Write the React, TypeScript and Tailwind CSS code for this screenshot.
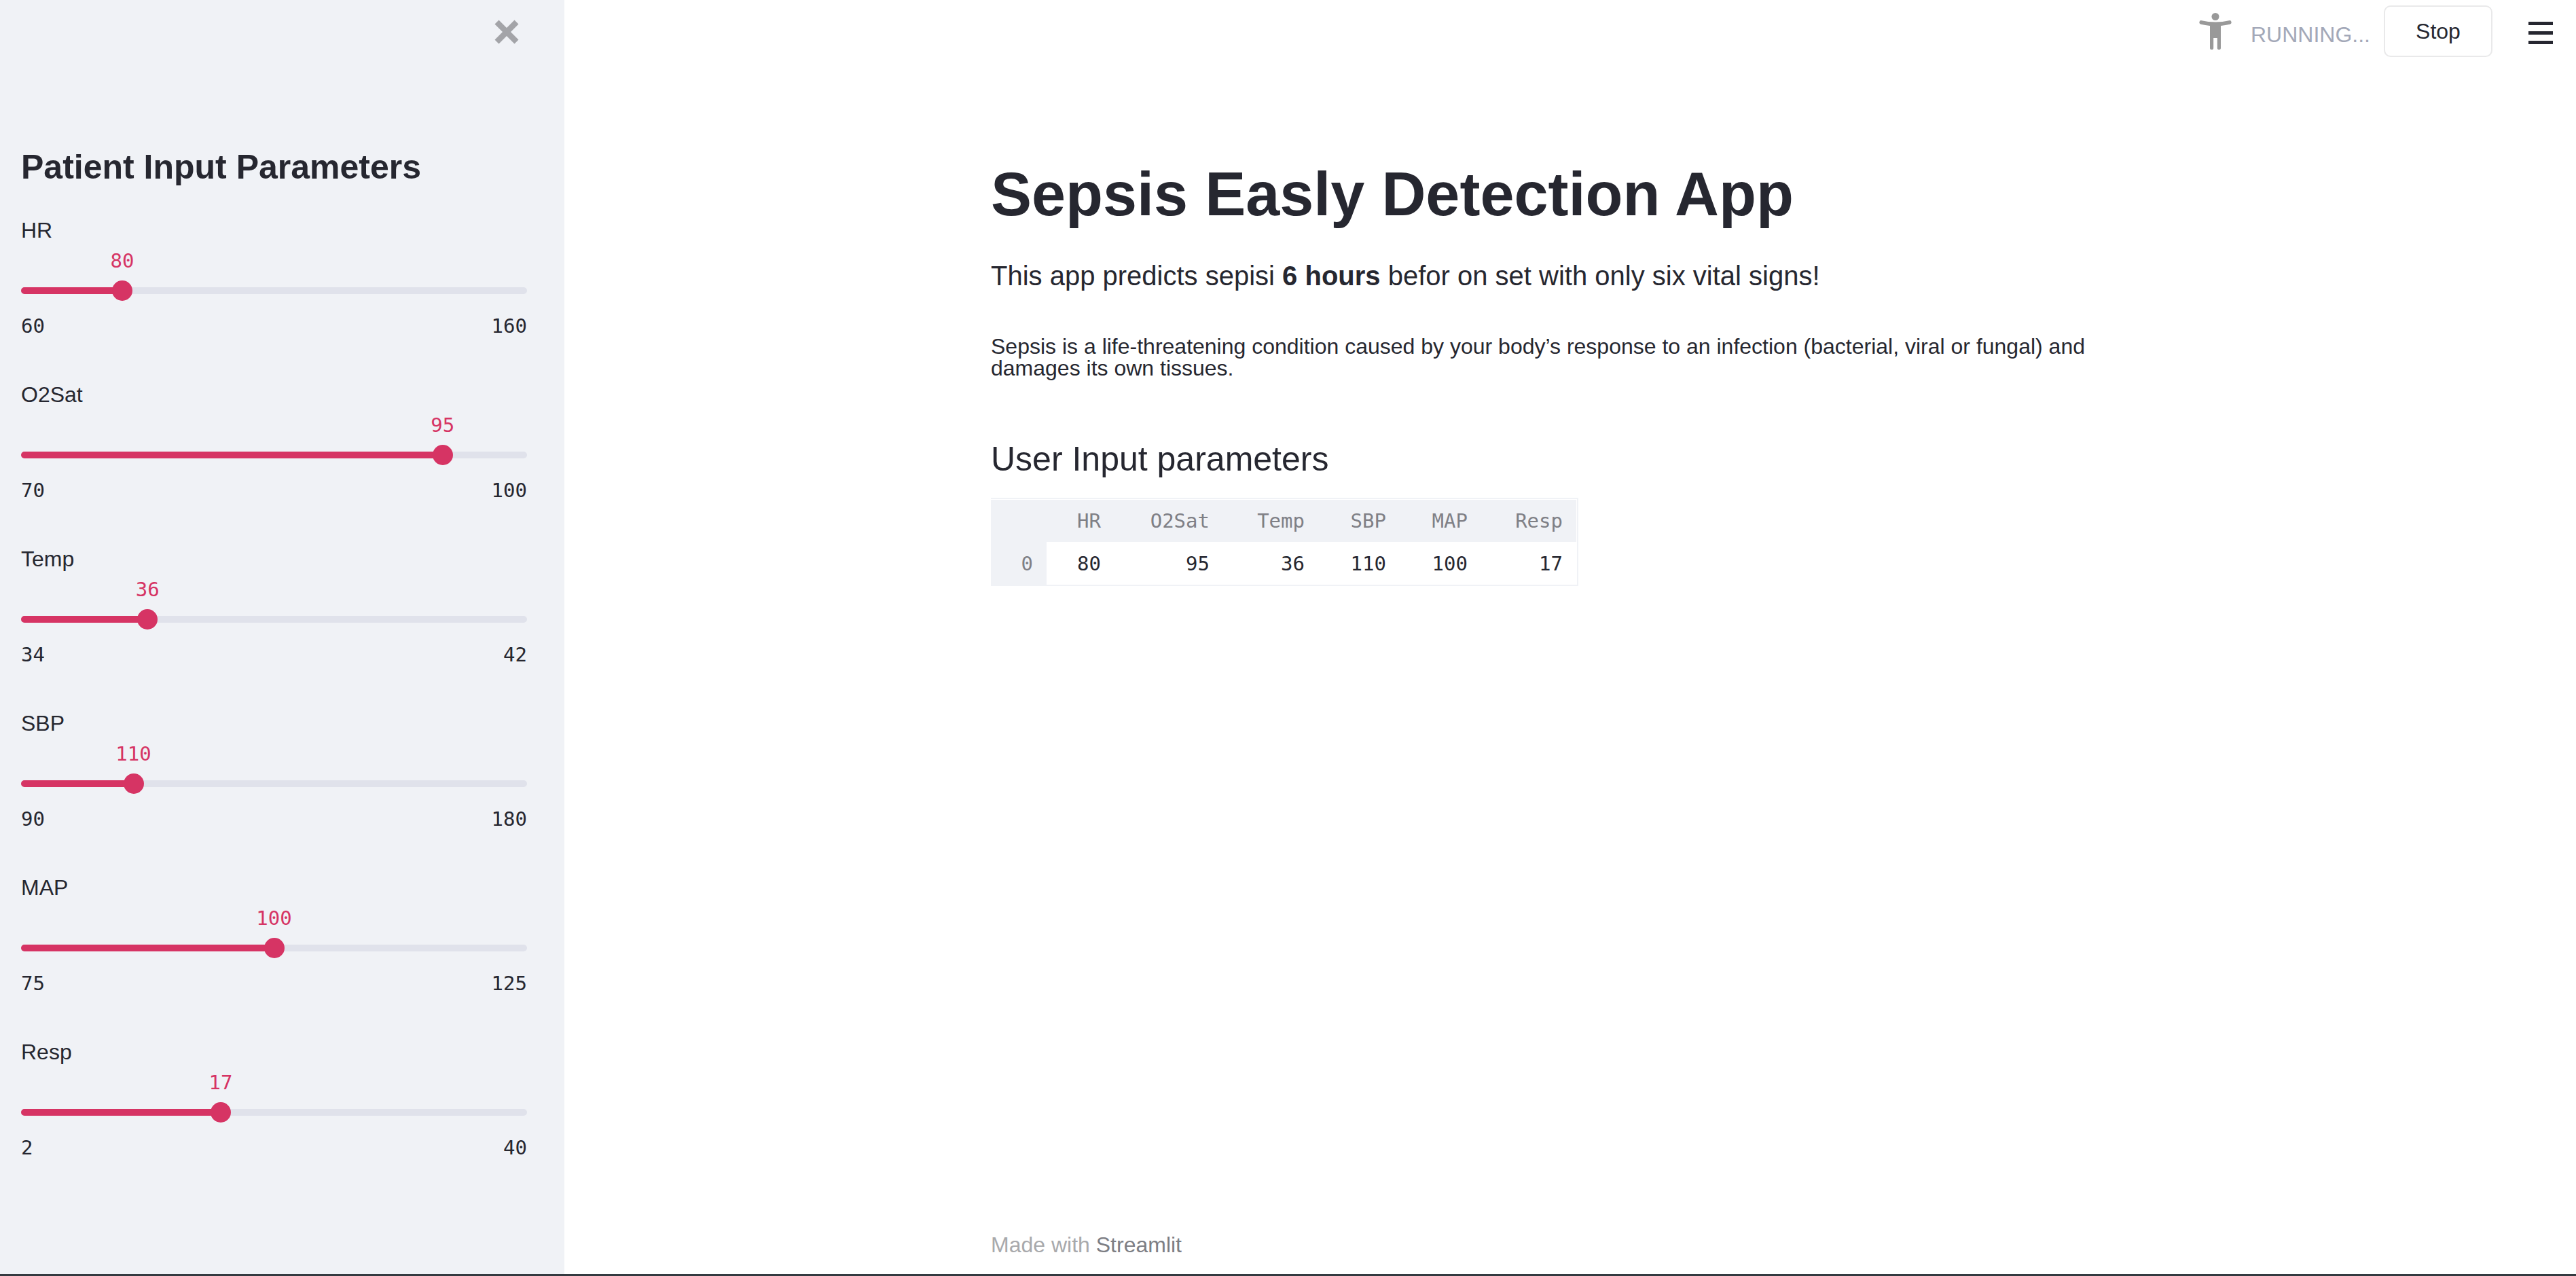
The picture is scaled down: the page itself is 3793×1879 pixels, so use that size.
import { useState } from "react";

type Vital = { name: string; min: number; max: number; initial: number; column: string };

const vitals: Vital[] = [
  { name: "HR", min: 60, max: 160, initial: 80, column: "w-[100px]" },
  { name: "O2Sat", min: 70, max: 100, initial: 95, column: "w-40" },
  { name: "Temp", min: 34, max: 42, initial: 36, column: "w-[140px]" },
  { name: "SBP", min: 90, max: 180, initial: 110, column: "w-[120px]" },
  { name: "MAP", min: 75, max: 125, initial: 100, column: "w-[120px]" },
  { name: "Resp", min: 2, max: 40, initial: 17, column: "w-[140px]" },
];

function VitalSlider({ vital, value, onChange }: { vital: Vital; value: number; onChange: (v: number) => void }) {
  const percent = ((value - vital.min) / (vital.max - vital.min)) * 100;
  const id = `slider-${vital.name}`;
  return (
    <div>
      <label htmlFor={id} className="block text-[32px] leading-[48px]">
        {vital.name}
      </label>
      <div className="relative mt-[50px] h-[30px]">
        <div className="absolute inset-x-0 top-[10px] h-[10px] overflow-hidden rounded-[5px] bg-[#e0e2eb]">
          <div className="h-full bg-[#d63464]" style={{ width: `${percent}%` }} />
        </div>
        <div
          className="absolute top-0 size-[30px] -translate-x-1/2 rounded-full bg-[#d63464]"
          style={{ left: `${percent}%` }}
        />
        <output
          htmlFor={id}
          className="absolute bottom-[41px] -translate-x-1/2 font-['DejaVu_Sans_Mono',monospace] text-[29px] leading-9 text-[#d63464]"
          style={{ left: `${percent}%` }}
        >
          {value}
        </output>
        <input
          id={id}
          type="range"
          min={vital.min}
          max={vital.max}
          value={value}
          onChange={(e) => onChange(Number(e.target.value))}
          className="absolute inset-0 m-0 h-full w-full cursor-pointer opacity-0"
        />
      </div>
      <div className="mt-[19px] flex justify-between font-['DejaVu_Sans_Mono',monospace] text-[29px] leading-9">
        <span>{vital.min}</span>
        <span>{vital.max}</span>
      </div>
    </div>
  );
}

export default function App() {
  const [values, setValues] = useState(vitals.map((v) => v.initial));

  return (
    <div className="flex min-h-screen flex-col bg-white font-['Liberation_Sans',Arial,sans-serif] text-[#262730]">
      <div className="flex flex-1">
        <aside className="w-[831px] shrink-0 bg-[#f0f2f6] pr-[55px] pl-[31px]">
          <div className="flex h-[94px] items-center justify-end pr-3">
            <button type="button" aria-label="Close sidebar" className="text-[#a3a4a8]">
              <svg viewBox="0 0 36 36" className="size-9" fill="currentColor">
                <path d="M0.5 6.5 6.5 0.5 18 12 29.5 0.5 35.5 6.5 24 18 35.5 29.5 29.5 35.5 18 24 6.5 35.5 0.5 29.5 12 18Z" />
              </svg>
            </button>
          </div>
          <h2 className="mt-[121px] text-[50px] leading-[62px] font-bold">Patient Input Parameters</h2>
          <div className="mt-[38px] flex flex-col gap-[59px]">
            {vitals.map((vital, i) => (
              <VitalSlider
                key={vital.name}
                vital={vital}
                value={values[i]}
                onChange={(v) => setValues(values.map((old, j) => (j === i ? v : old)))}
              />
            ))}
          </div>
        </aside>

        <div className="flex min-w-0 flex-1 flex-col">
          <header className="flex h-[92px] items-center justify-end pr-[34px]">
            <svg viewBox="0 0 48 56" className="h-14 w-12" fill="#999999" aria-hidden="true">
              <ellipse cx="24" cy="6.5" rx="5.5" ry="5.5" />
              <path d="M3.8 12.2Q13.5 14.4 24 14.4T44.200 12.200A2.800 2.800 0 0 1 45.400 17.700Q39 19.300 32 20V52.500A2.600 2.600 0 0 1 26.800 52.500V38H21.200V52.500A2.600 2.600 0 0 1 16 52.500V20Q9 19.300 2.600 17.700A2.800 2.800 0 0 1 3.800 12.200Z" />
            </svg>
            <span className="mt-[10px] ml-7 text-[32px] leading-10 text-[#a3a8b8]">RUNNING...</span>
            <button
              type="button"
              className="ml-5 h-[76px] w-40 rounded-[10px] border-2 border-[#e9e9ea] bg-white text-[32px] leading-10"
            >
              Stop
            </button>
            <button type="button" aria-label="Menu" className="ml-[53px] flex w-9 flex-col gap-[9px] pt-3 pb-2">
              <span className="h-[5px] bg-[#262730]" />
              <span className="h-[5px] bg-[#262730]" />
              <span className="h-[5px] bg-[#262730]" />
            </button>
          </header>

          <main className="mx-auto flex w-full max-w-[1706px] flex-1 flex-col">
            <h1 className="mt-[140px] text-[90px] leading-[108px] font-bold">Sepsis Easly Detection App</h1>
            <p className="mt-9 text-[40px] leading-[60px]">
              This app predicts sepisi <strong>6 hours</strong> befor on set with only six vital signs!
            </p>
            <p className="mt-[58px] text-[32px] leading-8">
              Sepsis is a life-threatening condition caused by your body’s response to an infection (bacterial, viral
              or fungal) and damages its own tissues.
            </p>
            <h2 className="mt-[87px] text-[50px] leading-[62px]">User Input parameters</h2>
            <div className="mt-[26px] w-max border-2 border-l-0 border-[#f0f2f6] pt-px pr-px">
              <table className="table-fixed border-collapse text-right font-['DejaVu_Sans_Mono',monospace] text-[29px] leading-8">
                <thead>
                  <tr className="h-[62px] bg-[#f0f2f6] text-[#7f8086]">
                    <td className="w-[82px]" />
                    {vitals.map((v) => (
                      <th key={v.name} scope="col" className={`${v.column} pr-5 font-normal`}>
                        {v.name}
                      </th>
                    ))}
                  </tr>
                </thead>
                <tbody>
                  <tr className="h-[63px]">
                    <th scope="row" className="bg-[#f0f2f6] pr-5 font-normal text-[#7f8086]">
                      0
                    </th>
                    {values.map((v, i) => (
                      <td key={vitals[i].name} className="pr-5">
                        {v}
                      </td>
                    ))}
                  </tr>
                </tbody>
              </table>
            </div>
            <footer className="mt-auto pb-[19px] text-[32px] leading-[48px] text-[#a8a9ac]">
              Made with{" "}
              <a href="https://streamlit.io" className="text-[#7d7e84]">
                Streamlit
              </a>
            </footer>
          </main>
        </div>
      </div>
      <div className="h-[3px] bg-[#343a40]" />
    </div>
  );
}
